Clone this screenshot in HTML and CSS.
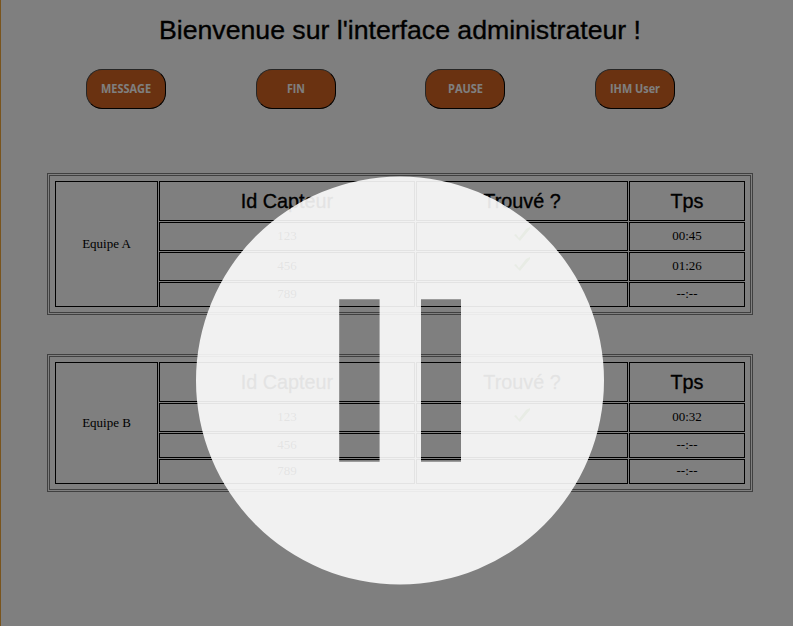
FILE: index.html
```html
<!DOCTYPE html>
<html lang="fr">
<head>
<meta charset="utf-8">
<title>Interface administrateur</title>
<link rel="stylesheet" href="styles.css">
</head>
<body>
<main class="page">
  <h1 class="title"><svg width="490" height="38"><text x="0" y="27.5" textLength="482">Bienvenue sur l'interface administrateur !</text></svg></h1>
  <nav class="actions">
    <button class="btn"><svg width="76" height="30"><text x="13" y="19" textLength="50" lengthAdjust="spacingAndGlyphs">MESSAGE</text></svg></button>
    <button class="btn"><svg width="76" height="30"><text x="29" y="19" textLength="18" lengthAdjust="spacingAndGlyphs">FIN</text></svg></button>
    <button class="btn"><svg width="76" height="30"><text x="21" y="19" textLength="35" lengthAdjust="spacingAndGlyphs">PAUSE</text></svg></button>
    <button class="btn"><svg width="76" height="30"><text x="13" y="19" textLength="50" lengthAdjust="spacingAndGlyphs">IHM User</text></svg></button>
  </nav>
  <section class="team team-a">
    <div class="cell name">Equipe A</div>
    <div class="cell head">Id Capteur</div><div class="cell head">Trouvé ?</div><div class="cell head">Tps</div>
    <div class="cell">123</div><div class="cell"><svg class="check" viewBox="0 0 16 15"><path d="M0 8l2-1 3 4L12 2l4-2v2L6 14z"/></svg></div><div class="cell">00:45</div>
    <div class="cell">456</div><div class="cell"><svg class="check" viewBox="0 0 16 15"><path d="M0 8l2-1 3 4L12 2l4-2v2L6 14z"/></svg></div><div class="cell">01:26</div>
    <div class="cell">789</div><div class="cell"></div><div class="cell">--:--</div>
  </section>
  <section class="team team-b">
    <div class="cell name">Equipe B</div>
    <div class="cell head">Id Capteur</div><div class="cell head">Trouvé ?</div><div class="cell head">Tps</div>
    <div class="cell">123</div><div class="cell"><svg class="check" viewBox="0 0 16 15"><path d="M0 8l2-1 3 4L12 2l4-2v2L6 14z"/></svg></div><div class="cell">00:32</div>
    <div class="cell">456</div><div class="cell"></div><div class="cell">--:--</div>
    <div class="cell">789</div><div class="cell"></div><div class="cell">--:--</div>
  </section>
</main>
<div class="overlay">
  <svg class="pause" viewBox="0 0 793 626"><path fill-rule="evenodd" d="M196 380.5a204 204 0 1 0 408 0a204 204 0 1 0-408 0zM339.2 299.3h40.4v162.5h-40.4zM421 299.3h40v162.5h-40z"/></svg>
</div>
</body>
</html>
```
FILE: styles.css
```css
* { box-sizing: border-box; }
body { margin: 0; background: #fff; overflow: hidden; }
.page { height: 626px; border-left: 1px solid #f2a93b; padding: 11px 40px 0 46px; }
.title { margin: 0; height: 38px; padding-left: 112px; font: 400 27px "Liberation Sans", Arial, sans-serif; line-height: 38px; }
.title svg { display: block; font-size: 26.7px; stroke: #000; stroke-width: .35px; }
.actions { display: flex; gap: 89.67px; padding-left: 39px; margin: 20px 0 64px; }
.btn { flex: none; display: flex; align-items: center; justify-content: center; width: 80px; height: 40px; padding: 0; border: 1px solid; border-color: #4c4c4c #000 #000 #4c4c4c; border-radius: 16px; background: #d56522; }
.btn svg { flex: none; fill: #fff; font: 700 12px "Open Sans", sans-serif; overflow: visible; }
.team { display: grid; width: 706px; grid-template-columns: 103px 256px 212px 116px; gap: 1px; padding: 5px; border: 3px double #808080; margin-bottom: 39px; }
.team-a { grid-template-rows: 40px 29px 29px 25px; }
.team-b { grid-template-rows: 40px 29px 25px 25px; }
.cell { display: flex; align-items: center; justify-content: center; border: 1px solid #000; padding-bottom: 2px; font: 13px "Liberation Serif", "Times New Roman", serif; }
.name { grid-row: 1 / 5; padding-bottom: 0; }
.head { padding-bottom: 0; font: 19.8px "Liberation Sans", Arial, sans-serif; -webkit-text-stroke: .35px #000; }
.check { width: 16px; height: 15px; margin-top: -2px; fill: #5f9a30; }
.overlay { position: fixed; inset: 0; background: rgba(0, 0, 0, .5); }
.pause { display: block; width: 793px; height: 626px; fill: rgba(255, 255, 255, .89); }
```
